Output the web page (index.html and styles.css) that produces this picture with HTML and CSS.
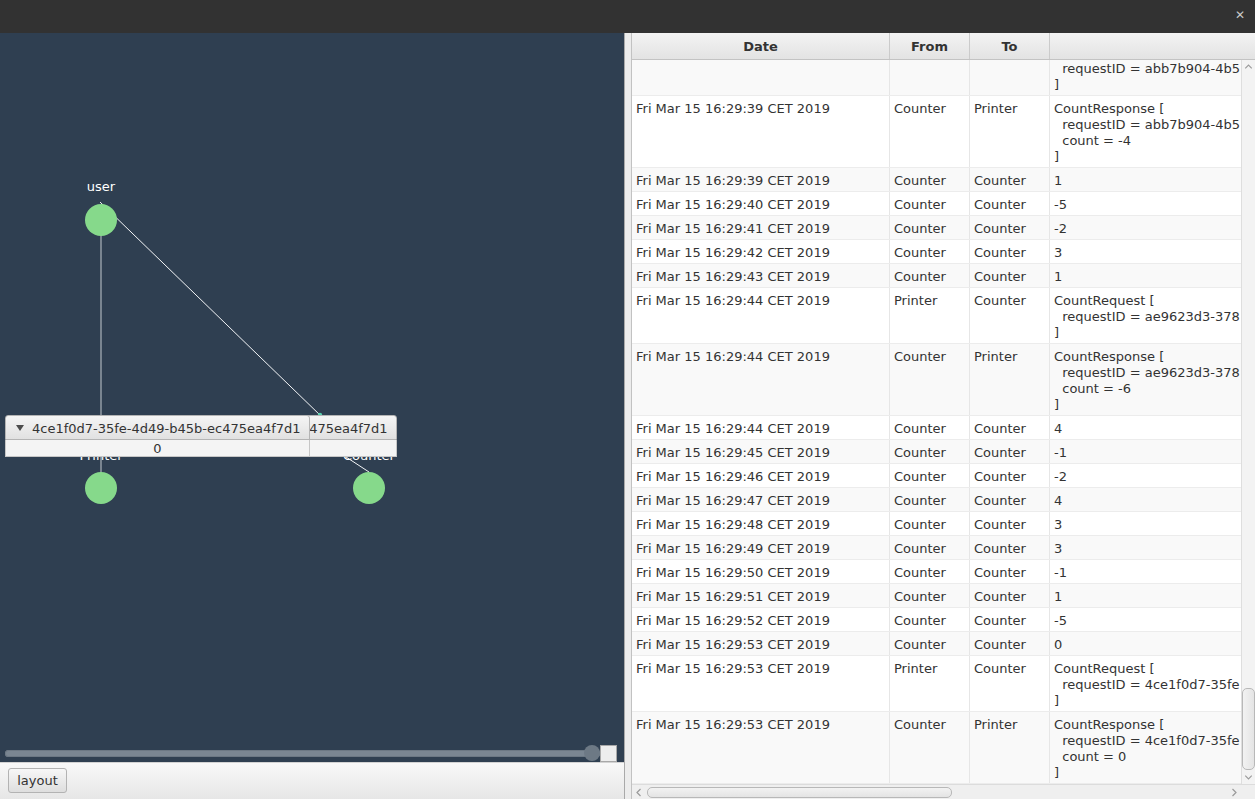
FILE: index.html
```html
<!DOCTYPE html>
<html>
<head>
<meta charset="utf-8">
<link rel="stylesheet" href="styles.css">
</head>
<body>
<header class="titlebar"><span class="close">✕</span></header>
<main class="main">
  <section class="left">
    <div class="canvas">
      <svg class="graph" width="624" height="711" viewBox="0 33 624 711">
        <line x1="101" y1="220" x2="101" y2="488" stroke="#a3abb3" stroke-width="1.3"/>
        <polyline points="100,202 322,417 343,455 369,472" fill="none" stroke="#f2f4f6" stroke-width="1"/>
        <circle cx="320" cy="415" r="2.2" fill="#58cfae"/>
        <circle cx="101" cy="220" r="16" fill="#86d98b"/>
        <circle cx="101" cy="488" r="16" fill="#86d98b"/>
        <circle cx="369" cy="488" r="16" fill="#86d98b"/>
        <text class="lbl" x="101" y="191">user</text>
        <text class="lbl" x="101" y="460">Printer</text>
        <text class="lbl" x="369" y="460">Counter</text>
      </svg>
      <div class="pane pane-b">
        <div class="pane-title"><span class="arrow"></span><span>4ce1f0d7-35fe-4d49-b45b-ec475ea4f7d1</span></div>
        <div class="pane-body">0</div>
      </div>
      <div class="pane pane-a">
        <div class="pane-title"><span class="arrow"></span><span>4ce1f0d7-35fe-4d49-b45b-ec475ea4f7d1</span></div>
        <div class="pane-body">0</div>
      </div>
    </div>
    <div class="slider-row">
      <div class="track"><span class="knob"></span></div>
      <div class="sq"></div>
    </div>
    <div class="toolbar"><button class="btn">layout</button></div>
  </section>
  <div class="divider"></div>
  <section class="right">
    <div class="thead">
      <div class="th w-date">Date</div>
      <div class="th w-from">From</div>
      <div class="th w-to">To</div>
      <div class="th w-msg"></div>
    </div>
    <div class="tbody">
      <div class="viewport">
        <div class="rows">
<div class="row"><div class="c w-date">Fri Mar 15 16:29:39 CET 2019</div><div class="c w-from">Printer</div><div class="c w-to">Counter</div><div class="c w-msg">CountRequest [
  requestID = abb7b904-4b5
]</div></div>
<div class="row"><div class="c w-date">Fri Mar 15 16:29:39 CET 2019</div><div class="c w-from">Counter</div><div class="c w-to">Printer</div><div class="c w-msg">CountResponse [
  requestID = abb7b904-4b5
  count = -4
]</div></div>
<div class="row"><div class="c w-date">Fri Mar 15 16:29:39 CET 2019</div><div class="c w-from">Counter</div><div class="c w-to">Counter</div><div class="c w-msg">1</div></div>
<div class="row"><div class="c w-date">Fri Mar 15 16:29:40 CET 2019</div><div class="c w-from">Counter</div><div class="c w-to">Counter</div><div class="c w-msg">-5</div></div>
<div class="row"><div class="c w-date">Fri Mar 15 16:29:41 CET 2019</div><div class="c w-from">Counter</div><div class="c w-to">Counter</div><div class="c w-msg">-2</div></div>
<div class="row"><div class="c w-date">Fri Mar 15 16:29:42 CET 2019</div><div class="c w-from">Counter</div><div class="c w-to">Counter</div><div class="c w-msg">3</div></div>
<div class="row"><div class="c w-date">Fri Mar 15 16:29:43 CET 2019</div><div class="c w-from">Counter</div><div class="c w-to">Counter</div><div class="c w-msg">1</div></div>
<div class="row"><div class="c w-date">Fri Mar 15 16:29:44 CET 2019</div><div class="c w-from">Printer</div><div class="c w-to">Counter</div><div class="c w-msg">CountRequest [
  requestID = ae9623d3-378
]</div></div>
<div class="row"><div class="c w-date">Fri Mar 15 16:29:44 CET 2019</div><div class="c w-from">Counter</div><div class="c w-to">Printer</div><div class="c w-msg">CountResponse [
  requestID = ae9623d3-378
  count = -6
]</div></div>
<div class="row"><div class="c w-date">Fri Mar 15 16:29:44 CET 2019</div><div class="c w-from">Counter</div><div class="c w-to">Counter</div><div class="c w-msg">4</div></div>
<div class="row"><div class="c w-date">Fri Mar 15 16:29:45 CET 2019</div><div class="c w-from">Counter</div><div class="c w-to">Counter</div><div class="c w-msg">-1</div></div>
<div class="row"><div class="c w-date">Fri Mar 15 16:29:46 CET 2019</div><div class="c w-from">Counter</div><div class="c w-to">Counter</div><div class="c w-msg">-2</div></div>
<div class="row"><div class="c w-date">Fri Mar 15 16:29:47 CET 2019</div><div class="c w-from">Counter</div><div class="c w-to">Counter</div><div class="c w-msg">4</div></div>
<div class="row"><div class="c w-date">Fri Mar 15 16:29:48 CET 2019</div><div class="c w-from">Counter</div><div class="c w-to">Counter</div><div class="c w-msg">3</div></div>
<div class="row"><div class="c w-date">Fri Mar 15 16:29:49 CET 2019</div><div class="c w-from">Counter</div><div class="c w-to">Counter</div><div class="c w-msg">3</div></div>
<div class="row"><div class="c w-date">Fri Mar 15 16:29:50 CET 2019</div><div class="c w-from">Counter</div><div class="c w-to">Counter</div><div class="c w-msg">-1</div></div>
<div class="row"><div class="c w-date">Fri Mar 15 16:29:51 CET 2019</div><div class="c w-from">Counter</div><div class="c w-to">Counter</div><div class="c w-msg">1</div></div>
<div class="row"><div class="c w-date">Fri Mar 15 16:29:52 CET 2019</div><div class="c w-from">Counter</div><div class="c w-to">Counter</div><div class="c w-msg">-5</div></div>
<div class="row"><div class="c w-date">Fri Mar 15 16:29:53 CET 2019</div><div class="c w-from">Counter</div><div class="c w-to">Counter</div><div class="c w-msg">0</div></div>
<div class="row"><div class="c w-date">Fri Mar 15 16:29:53 CET 2019</div><div class="c w-from">Printer</div><div class="c w-to">Counter</div><div class="c w-msg">CountRequest [
  requestID = 4ce1f0d7-35fe
]</div></div>
<div class="row"><div class="c w-date">Fri Mar 15 16:29:53 CET 2019</div><div class="c w-from">Counter</div><div class="c w-to">Printer</div><div class="c w-msg">CountResponse [
  requestID = 4ce1f0d7-35fe
  count = 0
]</div></div>
        </div>
      </div>
      <div class="vscroll">
        <div class="sb-btn"><svg width="14" height="14" viewBox="0 0 14 14"><path d="M3.5 8.5 L7 5 L10.5 8.5" fill="none" stroke="#9a9a9a" stroke-width="1.2"/></svg></div>
        <div class="vtrack"><div class="vthumb"></div></div>
        <div class="sb-btn"><svg width="14" height="14" viewBox="0 0 14 14"><path d="M3.5 5.5 L7 9 L10.5 5.5" fill="none" stroke="#9a9a9a" stroke-width="1.2"/></svg></div>
      </div>
    </div>
    <div class="hscroll-row">
      <div class="hscroll">
        <div class="sb-btn h"><svg width="14" height="15" viewBox="0 0 14 15"><path d="M8.5 4 L5 7.5 L8.5 11" fill="none" stroke="#9a9a9a" stroke-width="1.2"/></svg></div>
        <div class="htrack"><div class="hthumb"></div></div>
        <div class="sb-btn h"><svg width="14" height="15" viewBox="0 0 14 15"><path d="M5.5 4 L9 7.5 L5.5 11" fill="none" stroke="#9a9a9a" stroke-width="1.2"/></svg></div>
      </div>
      <div class="corner"></div>
    </div>
  </section>
</main>
</body>
</html>
```
FILE: styles.css
```css
html, body {
  margin: 0;
  padding: 0;
}
body {
  width: 1255px;
  height: 799px;
  overflow: hidden;
  display: flex;
  flex-direction: column;
  font-family: "DejaVu Sans", "Liberation Sans", sans-serif;
  font-size: 13px;
  color: #333333;
}
.titlebar {
  height: 33px;
  flex: none;
  background: #323232;
  display: flex;
  justify-content: flex-end;
  align-items: center;
  padding-right: 10px;
}
.close {
  color: #c9c9c9;
  font-size: 12px;
  font-weight: bold;
  line-height: 12px;
  margin-top: -4px;
}
.main {
  flex: 1;
  display: flex;
  min-height: 0;
}
.left {
  width: 624px;
  flex: none;
  display: flex;
  flex-direction: column;
  background: #2f3f51;
}
.canvas {
  flex: 1;
  position: relative;
  overflow: hidden;
}
.graph {
  position: absolute;
  left: 0;
  top: 0;
}
.lbl {
  fill: #ffffff;
  font-family: "DejaVu Sans", sans-serif;
  font-size: 13px;
  text-anchor: middle;
}
.pane {
  position: absolute;
  top: 382px;
  width: 305px;
  height: 42px;
  display: flex;
  flex-direction: column;
}
.pane-a { left: 5px; }
.pane-b { left: 92px; }
.pane-title {
  height: 25px;
  box-sizing: border-box;
  border: 1px solid #b4b4b4;
  border-radius: 3px 3px 0 0;
  background: linear-gradient(#f5f5f5, #e1e1e1);
  display: flex;
  align-items: center;
  padding-left: 10px;
  padding-top: 1px;
  gap: 8px;
  white-space: nowrap;
  overflow: hidden;
  color: #333;
}
.arrow {
  width: 0;
  height: 0;
  border-left: 4px solid transparent;
  border-right: 4px solid transparent;
  border-top: 6px solid #4d4d4d;
}
.pane-body {
  height: 17px;
  box-sizing: border-box;
  border: 1px solid #c6c6c6;
  border-top: none;
  background: #f4f4f4;
  text-align: center;
  line-height: 16px;
  padding-top: 1px;
  color: #333;
}
.slider-row {
  height: 18px;
  flex: none;
  display: flex;
  align-items: center;
  padding-left: 5px;
  padding-right: 7px;
}
.track {
  flex: 1;
  height: 7px;
  position: relative;
  border-radius: 4px;
  background: #7a8692;
  box-shadow: inset 0 0 0 1px #6c7884;
}
.knob {
  position: absolute;
  right: 0;
  top: -5px;
  width: 16px;
  height: 16px;
  border-radius: 50%;
  background: #6d7985;
}
.sq {
  width: 17px;
  height: 17px;
  box-sizing: border-box;
  background: #ededed;
  border: 1px solid #a8a8a8;
}
.toolbar {
  height: 37px;
  flex: none;
  box-sizing: border-box;
  border-top: 1px solid #d3d3d3;
  background: linear-gradient(#f8f8f8, #e6e6e6);
  padding: 5px 8px;
}
.btn {
  height: 25px;
  width: 59px;
  padding: 0;
  border: 1px solid #b3b3b3;
  border-radius: 3px;
  background: linear-gradient(#f7f7f7, #dedede);
  font-family: "DejaVu Sans", sans-serif;
  font-size: 13px;
  color: #333;
}
.divider {
  width: 7px;
  flex: none;
  box-sizing: border-box;
  border-left: 1px solid #a9a9a9;
  background: #ececec;
}
.right {
  flex: 1;
  min-width: 0;
  display: flex;
  flex-direction: column;
  border-left: 1px solid #c2c2c2;
  background: #ffffff;
}
.thead {
  height: 27px;
  flex: none;
  box-sizing: border-box;
  display: flex;
  background: linear-gradient(#f3f3f3, #e3e3e3);
  border-bottom: 1px solid #c3c3c3;
  overflow: hidden;
}
.th {
  flex: none;
  box-sizing: border-box;
  border-right: 1px solid #cbcbcb;
  font-weight: bold;
  text-align: center;
  padding-top: 6px;
  line-height: 16px;
  color: #333;
}
.w-date { width: 258px; }
.w-from { width: 80px; }
.w-to { width: 80px; }
.w-msg { width: 400px; }
.th.w-msg { flex: 1; border-right: none; }
.tbody {
  flex: 1;
  min-height: 0;
  display: flex;
}
.viewport {
  flex: 1;
  min-width: 0;
  overflow: hidden;
}
.rows {
  margin-top: -20px;
}
.row {
  display: flex;
  border-bottom: 1px solid #ececec;
  background: #ffffff;
}
.row:nth-child(odd) {
  background: #f9f9f9;
}
.c {
  flex: none;
  box-sizing: border-box;
  border-right: 1px solid #e6e6e6;
  padding: 5px 4px 2px 4px;
  line-height: 16px;
  white-space: pre;
  overflow: hidden;
  color: #333;
}
.vscroll {
  width: 14px;
  flex: none;
  box-sizing: border-box;
  display: flex;
  flex-direction: column;
  background: #f3f3f3;
  border-left: 1px solid #dedede;
}
.sb-btn {
  height: 14px;
  flex: none;
  display: flex;
  align-items: center;
  justify-content: center;
}
.sb-btn svg { display: block; }
.vtrack {
  flex: 1;
  display: flex;
  flex-direction: column;
  justify-content: flex-end;
}
.vthumb {
  height: 82px;
  box-sizing: border-box;
  border: 1px solid #b8b8b8;
  border-radius: 5px;
  background: linear-gradient(90deg, #f2f2f2, #e4e4e4);
}
.hscroll-row {
  height: 15px;
  flex: none;
  display: flex;
  background: #efefef;
  border-top: 1px solid #dcdcdc;
  box-sizing: border-box;
}
.hscroll {
  flex: 1;
  display: flex;
}
.sb-btn.h {
  width: 14px;
  height: 14px;
}
.htrack {
  flex: 1;
  display: flex;
  align-items: center;
  padding-left: 1px;
}
.hthumb {
  width: 305px;
  height: 11px;
  box-sizing: border-box;
  border: 1px solid #b8b8b8;
  border-radius: 5px;
  background: linear-gradient(#f2f2f2, #e4e4e4);
}
.corner {
  width: 14px;
  flex: none;
  background: #efefef;
}
```
